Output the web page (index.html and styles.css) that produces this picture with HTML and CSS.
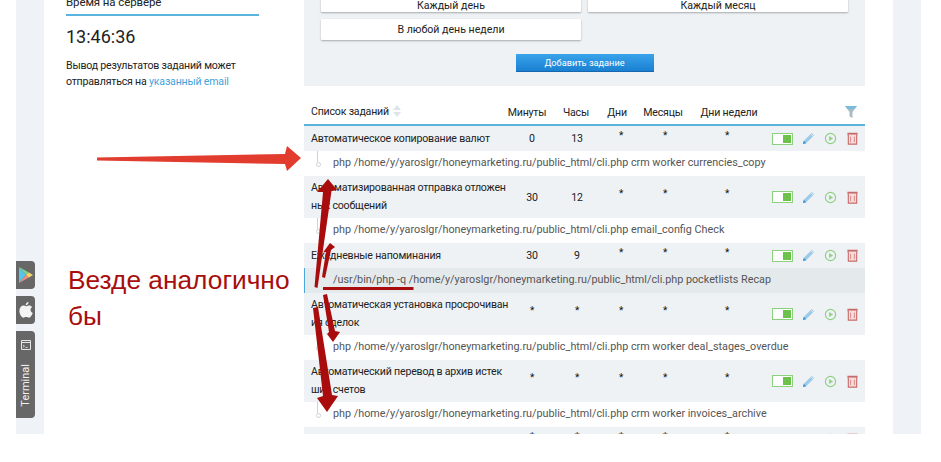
FILE: index.html
```html
<!DOCTYPE html>
<html lang="ru">
<head>
<meta charset="utf-8">
<title>Планировщик заданий</title>
<link rel="stylesheet" href="styles.css">
</head>
<body>
<div class="frame">
  <div class="content">
    <aside class="side">
      <h2 class="side-title">Время на сервере</h2>
      <div class="clock">13:46:36</div>
      <p class="note">Вывод результатов заданий может отправляться на <a href="#">указанный email</a></p>
    </aside>
    <main class="main">
      <section class="panel">
        <div class="presets">
          <button class="preset">Каждый день</button>
          <button class="preset">Каждый месяц</button>
          <button class="preset">В любой день недели</button>
        </div>
        <button class="add">Добавить задание</button>
      </section>
      <section class="jobs">
        <div class="row head">
          <div class="name">Список заданий <svg class="sort" width="8" height="14" viewBox="0 0 8 14"><path d="M4 1 8 6H0zM4 13 0 8h8z" fill="#dfe5ea"/></svg></div>
          <div>Минуты</div><div>Часы</div><div>Дни</div><div>Месяцы</div><div>Дни недели</div>
          <div class="filter"><svg width="12" height="14" viewBox="0 0 12 14"><path d="M0 1h12L7.500 7v6l-3-1.500V7z" fill="#a9bcc4"/><path d="M0 1h12L9 4H3z" fill="#79bcdd"/></svg></div>
        </div>

        <div class="row job">
          <div class="name">Автоматическое копирование валют</div>
          <div>0</div><div>13</div><div class="star">*</div><div class="star">*</div><div class="star">*</div>
          <div class="acts"><span class="toggle"><i></i></span><svg class="ic" viewBox="0 0 14 14"><use href="#pen"/></svg><svg class="ic" viewBox="0 0 14 14"><use href="#play"/></svg><svg class="ic" viewBox="0 0 14 14"><use href="#trash"/></svg></div>
        </div>
        <div class="cmd"><span class="tree"></span>php /home/y/yaroslgr/honeymarketing.ru/public_html/cli.php crm worker currencies_copy</div>

        <div class="row job">
          <div class="name">Автоматизированная отправка отложен<br>ных сообщений</div>
          <div>30</div><div>12</div><div class="star">*</div><div class="star">*</div><div class="star">*</div>
          <div class="acts"><span class="toggle"><i></i></span><svg class="ic" viewBox="0 0 14 14"><use href="#pen"/></svg><svg class="ic" viewBox="0 0 14 14"><use href="#play"/></svg><svg class="ic" viewBox="0 0 14 14"><use href="#trash"/></svg></div>
        </div>
        <div class="cmd"><span class="tree"></span>php /home/y/yaroslgr/honeymarketing.ru/public_html/cli.php email_config Check</div>

        <div class="row job">
          <div class="name">Ежедневные напоминания</div>
          <div>30</div><div>9</div><div class="star">*</div><div class="star">*</div><div class="star">*</div>
          <div class="acts"><span class="toggle"><i></i></span><svg class="ic" viewBox="0 0 14 14"><use href="#pen"/></svg><svg class="ic" viewBox="0 0 14 14"><use href="#play"/></svg><svg class="ic" viewBox="0 0 14 14"><use href="#trash"/></svg></div>
        </div>
        <div class="cmd active"><span class="tree"></span>/usr/bin/php -q /home/y/yaroslgr/honeymarketing.ru/public_html/cli.php pocketlists Recap</div>

        <div class="row job">
          <div class="name">Автоматическая установка просрочиван<br>ия сделок</div>
          <div class="star">*</div><div class="star">*</div><div class="star">*</div><div class="star">*</div><div class="star">*</div>
          <div class="acts"><span class="toggle"><i></i></span><svg class="ic" viewBox="0 0 14 14"><use href="#pen"/></svg><svg class="ic" viewBox="0 0 14 14"><use href="#play"/></svg><svg class="ic" viewBox="0 0 14 14"><use href="#trash"/></svg></div>
        </div>
        <div class="cmd"><span class="tree"></span>php /home/y/yaroslgr/honeymarketing.ru/public_html/cli.php crm worker deal_stages_overdue</div>

        <div class="row job">
          <div class="name">Автоматический перевод в архив истек<br>ших счетов</div>
          <div class="star">*</div><div class="star">*</div><div class="star">*</div><div class="star">*</div><div class="star">*</div>
          <div class="acts"><span class="toggle"><i></i></span><svg class="ic" viewBox="0 0 14 14"><use href="#pen"/></svg><svg class="ic" viewBox="0 0 14 14"><use href="#play"/></svg><svg class="ic" viewBox="0 0 14 14"><use href="#trash"/></svg></div>
        </div>
        <div class="cmd"><span class="tree"></span>php /home/y/yaroslgr/honeymarketing.ru/public_html/cli.php crm worker invoices_archive</div>

        <div class="row job">
          <div class="name">Автоматическая отправка сообщений</div>
          <div class="star">*</div><div class="star">*</div><div class="star">*</div><div class="star">*</div><div class="star">*</div>
          <div class="acts"><span class="toggle"><i></i></span><svg class="ic" viewBox="0 0 14 14"><use href="#pen"/></svg><svg class="ic" viewBox="0 0 14 14"><use href="#play"/></svg><svg class="ic" viewBox="0 0 14 14"><use href="#trash"/></svg></div>
        </div>
      </section>
    </main>
  </div>

  <nav class="tabs">
    <a class="tab tab-play"><svg width="14" height="16" viewBox="0 0 14 16"><path d="M0 0 7 8 0 16z" fill="#58c4e8"/><path d="M0 0 10 5.500 7 8z" fill="#7fd08c"/><path d="M0 16 10 10.500 7 8z" fill="#ef8a80"/><path d="M10 5.500 14 8l-4 2.500L7 8z" fill="#f5d36a"/></svg></a>
    <a class="tab tab-apple"><svg width="14" height="16" viewBox="0 0 14 16"><path d="M9.500 0c.2 1.600-1.200 3.300-2.800 3.300C6.500 1.700 8 .2 9.500 0zM7 4.300c.8 0 1.800-.8 3.200-.8 1 0 2.300.5 3 1.600-2.500 1.500-2.100 5 .6 6-.8 2-2.200 4.600-3.800 4.600-1 0-1.400-.6-2.800-.6s-1.900.6-2.800.6C2.500 15.700.400 12 .400 8.800c0-3.200 2-5.200 4-5.200 1.200 0 1.900.7 2.600.7z" fill="#f4f4f4"/></svg></a>
    <a class="tab tab-term"><svg width="10" height="10" viewBox="0 0 10 10"><path d="M.5.500h9v9h-9z" fill="none" stroke="#e6e6e6"/><path d="M1 2.500h8" stroke="#e6e6e6"/><path d="M2 5l1.500 1.200L2 7.400M4.500 7.500h2" fill="none" stroke="#e6e6e6" stroke-width=".8"/></svg><span>Terminal</span></a>
  </nav>
</div>

<div class="callout">Везде аналогично<br>бы</div>

<svg class="marks" width="941" height="462" viewBox="0 0 941 462">
  <path d="M97 157.500 285 154 287 146 301 158 287 171 285 164 97 160.500z" fill="#e23c2e"/>
  <g fill="#a90c0c">
    <path d="M314.500 287 323 192 317 192 328 179 337 190 331.500 191 317.500 288z"/>
    <path d="M322 277 326 252 323 252.500 330 243 335 247 331 250 325 278z"/>
    <path d="M323 287H413.500V290H323z"/>
    <path d="M323 295 329 332 327 334 333 342 340 332 335 331 327 294z"/>
    <path d="M313 308 323 396 317 398 327 412 338 396 332 395 318 307z"/>
  </g>
</svg>

<svg class="defs" width="0" height="0">
  <symbol id="pen" viewBox="0 0 14 14"><path d="M10.500 1 13 3.500 4.500 12 1 13 2 9.500z" fill="#9ccbea"/><path d="M2 9.500 4.500 12 1 13z" fill="#3d8fd0"/><path d="M9.500 2 12 4.500" stroke="#fff" stroke-width=".7"/></symbol>
  <symbol id="play" viewBox="0 0 14 14"><circle cx="7" cy="7" r="5.500" fill="none" stroke="#8fd083" stroke-width="1.200"/><path d="M5.500 4.300 9.800 7 5.500 9.700z" fill="#8fd083"/></symbol>
  <symbol id="trash" viewBox="0 0 14 14"><path d="M1.500 1.500h11M1.500 3h11" stroke="#c96a6a" stroke-width="1.200"/><path d="M2.500 3v10h9V3" fill="#f6dede" stroke="#c96a6a" stroke-width="1.200"/><path d="M5 5v6M9 5v6" stroke="#c96a6a" stroke-width=".8"/></symbol>
</svg>
</body>
</html>
```

FILE: styles.css
```css
* { box-sizing: border-box; }

html, body { margin: 0; height: 100%; }

body {
  position: relative;
  width: 941px;
  height: 462px;
  overflow: hidden;
  background: #fff;
  font-family: Roboto, "Noto Sans", sans-serif;
  color: #222;
}

.frame {
  position: relative;
  width: 905px;
  height: 434px;
  margin-left: 16px;
  padding: 0 28px;
  background: #eff3f7;
  overflow: hidden;
}

.content {
  display: flex;
  height: 434px;
  background: #fff;
}

.side {
  width: 260px;
  flex: none;
  padding: 0 0 0 22px;
}

.side-title {
  margin: -6px 0 0;
  width: 193px;
  height: 22px;
  border-bottom: 2px solid #5bb4dd;
  font-size: 11.500px;
  letter-spacing: -.1px;
  line-height: 16px;
  font-weight: 400;
}

.clock {
  margin-top: 9px;
  font-size: 18px;
  line-height: 24px;
}

.note {
  margin: 9px 0 0;
  width: 193px;
  font-size: 10.600px;
  letter-spacing: -.2px;
  line-height: 16px;
}

.note a { color: #3fa3dc; text-decoration: none; }

.main {
  width: 561px;
  flex: none;
}

.panel {
  height: 86px;
  background: #eef2f5;
  display: flex;
  flex-direction: column;
  overflow: hidden;
}

.presets {
  display: grid;
  grid-template-columns: 260px 260px;
  column-gap: 7px;
  row-gap: 7px;
  margin: -1px 0 0 17px;
}

.preset {
  height: 21px;
  border: 0;
  border-radius: 1px;
  background: #fff;
  box-shadow: 0 1px 2px rgba(0,0,0,.3);
  font: inherit;
  font-size: 10.600px;
  color: #222;
  padding: 0;
}

.preset:nth-child(-n+2) { height: 13px; line-height: 2px; }

.add {
  align-self: center;
  width: 138px;
  height: 18px;
  margin: 14px 0 0;
  border: 0;
  border-bottom: 1px solid #1667ad;
  background: linear-gradient(#39a3ea, #1a80d2);
  color: #fff;
  font: inherit;
  font-size: 9.200px;
  padding: 0;
}

.jobs { margin-top: 14px; }

.row {
  display: grid;
  align-items: center;
  text-align: center;
  font-size: 10.600px;
  letter-spacing: -.2px;
}

.row .name {
  text-align: left;
  padding-left: 7px;
  line-height: 18px;
  white-space: nowrap;
}

.head {
  grid-template-columns: 198px 50px 48px 34px 58px 74px 99px;
  height: 26px;
  border-bottom: 2px solid #5bb4dd;
}

.sort { vertical-align: -3px; margin-left: 2px; }

.filter { text-align: right; padding-right: 8px; }
.filter svg { display: inline-block; vertical-align: middle; }

.job {
  grid-template-columns: 208px 40px 50px 38px 50px 74px 101px;
  min-height: 25px;
  padding: 3px 0;
  background: #eef2f5;
}

.star { font-size: 10px; line-height: 9px; padding-bottom: 7px; color: #111; }

.acts {
  display: flex;
  align-items: center;
  padding-left: 8px;
  gap: 9px;
}

.toggle {
  display: block;
  width: 21px;
  height: 12px;
  border: 1px solid #8bd07c;
  background: #fff;
  padding: 1px;
}

.toggle i { display: block; width: 8px; height: 8px; margin-left: 9px; background: #6cc24a; }

.ic { width: 13px; height: 13px; flex: none; }

.cmd {
  position: relative;
  height: 25px;
  line-height: 24px;
  padding-left: 29px;
  font-size: 10.800px;
  color: #555;
  white-space: nowrap;
  background: #fff;
}

.cmd.active {
  background: #e4e9ec;
  border-left: 1px solid #4aa8dd;
  padding-left: 28px;
}

.tree {
  position: absolute;
  left: 13px;
  top: 0;
  width: 1px;
  height: 11px;
  background: #ccd3d8;
}

.tree::after {
  content: "";
  position: absolute;
  left: -1px;
  top: 11px;
  width: 3px;
  height: 3px;
  border: 1px solid #ccd3d8;
  border-radius: 50%;
}

.cmd.active .tree { display: none; }

.tabs {
  position: absolute;
  left: 0;
  top: 261px;
  width: 19px;
  display: flex;
  flex-direction: column;
  gap: 7px;
}

.tab {
  display: flex;
  align-items: center;
  justify-content: center;
  background: #676767;
  border-radius: 0 4px 4px 0;
  height: 28px;
}

.tab-term {
  height: 87px;
  flex-direction: column;
  justify-content: flex-start;
  padding-top: 9px;
  gap: 14px;
}

.tab-term span {
  writing-mode: vertical-rl;
  transform: rotate(180deg);
  color: #f0f0f0;
  font-size: 11px;
  line-height: 14px;
}

.callout {
  position: absolute;
  left: 68px;
  top: 262px;
  font-family: "Liberation Sans", Arial, sans-serif;
  font-size: 26.300px;
  line-height: 36px;
  color: #a80e0e;
}

.marks { position: absolute; left: 0; top: 0; pointer-events: none; }

.defs { position: absolute; }
```
